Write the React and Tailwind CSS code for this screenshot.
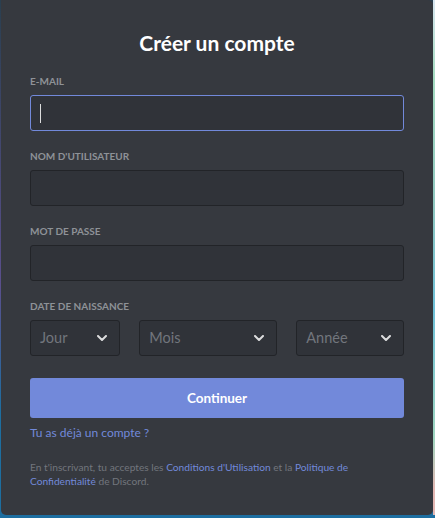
import React from "react";

const font = { fontFamily: "Lato, 'Noto Sans', sans-serif" };

function Chevron() {
  return (
    <svg width="10" height="6" viewBox="0 0 10 6" className="shrink-0">
      <path d="M1 1 L5 5 L9 1" fill="none" stroke="#dcddde" strokeWidth="2" strokeLinecap="round" strokeLinejoin="round" />
    </svg>
  );
}

function Field({ label, focused }) {
  return (
    <div className="flex flex-col">
      <div className="text-[10px] leading-[14px] font-bold uppercase text-[#8e9297]">{label}</div>
      <div
        className={
          "mt-[7px] h-[36px] rounded-[3px] bg-[#303339] border flex items-center pl-[9px] " +
          (focused ? "border-[#7289da]" : "border-[#222428]")
        }
      >
        {focused && <div className="w-[1px] h-[19px] bg-[#dcddde]" />}
      </div>
    </div>
  );
}

function Select({ label, w }) {
  return (
    <div className={"h-[36px] rounded-[3px] bg-[#303339] border border-[#222428] flex items-center justify-between pl-[9px] pr-[12px] " + w}>
      <span className="text-[14.5px] text-[#72767d] font-normal">{label}</span>
      <Chevron />
    </div>
  );
}

export default function App() {
  return (
    <div
      className="w-[435px] h-[518px] overflow-hidden"
      style={{ ...font, background: "linear-gradient(180deg, #2a3f4f 0%, #5a4f8c 55%, #1d6ea0 80%, #1d6ea0 100%)" }}
    >
      <div className="flex h-[515px]">
        <div className="w-[1px]" />
        <div className="w-[432px] h-[515px] bg-[#36393f] rounded-tr-[5px] rounded-b-[5px] px-[29px] pt-[30px] flex flex-col">
          <div className="text-center text-white font-bold text-[21px] leading-[26px]">Créer un compte</div>
          <div className="mt-[18px] flex flex-col gap-[18px] w-[374px]">
            <Field label="E-mail" focused />
            <Field label="Nom d'utilisateur" />
            <Field label="Mot de passe" />
            <div className="flex flex-col">
              <div className="text-[10px] leading-[14px] font-bold uppercase text-[#8e9297]">Date de naissance</div>
              <div className="mt-[7px] flex gap-[19.5px]">
                <Select label="Jour" w="w-[90px]" />
                <Select label="Mois" w="w-[138px]" />
                <Select label="Année" w="w-[108px]" />
              </div>
            </div>
          </div>
          <button className="mt-[22px] w-[374px] h-[40px] rounded-[3px] bg-[#7289da] text-white font-bold text-[13.5px]">Continuer</button>
          <div className="mt-[7px] text-[12px] leading-[16px] text-[#7289da]">Tu as déjà un compte{"\u202F"}?</div>
          <div className="mt-[20px] text-[10.2px] leading-[13.5px] text-[#72767d] w-[374px]">
            En t'inscrivant, tu acceptes les <span className="text-[#7289da]">Conditions d'Utilisation</span> et la{" "}
            <span className="text-[#7289da]">Politique de Confidentialité</span> de Discord.
          </div>
        </div>
        <div className="w-[2px] h-[515px]" style={{ background: "linear-gradient(180deg,#d8e6f0 0%, #a5dcc1 15%, #8fc7c0 40%, #6ec0d8 60%, #9fd6c0 85%, #e3b7b3 95%)" }} />
      </div>
    </div>
  );
}
